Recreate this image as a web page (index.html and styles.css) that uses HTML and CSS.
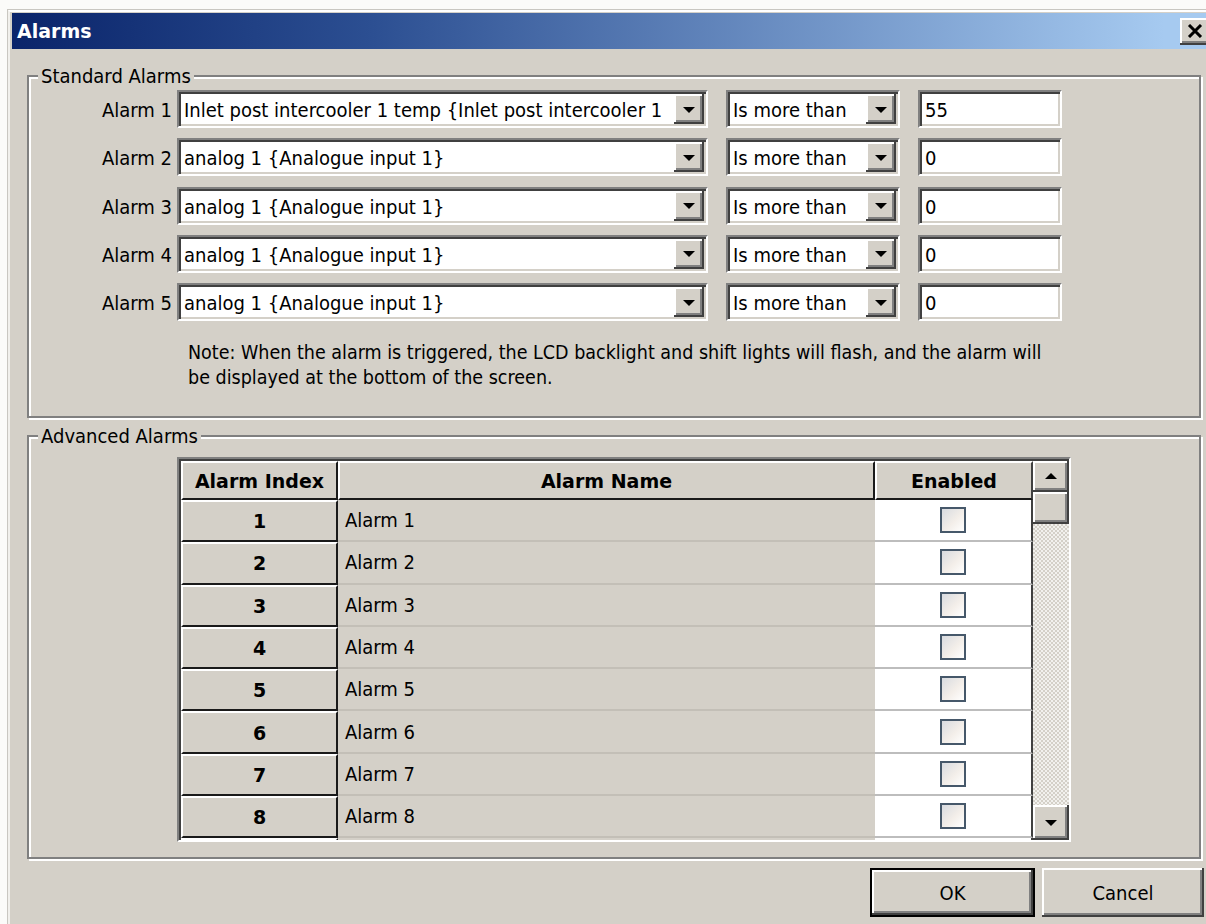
FILE: index.html
```html
<!DOCTYPE html>
<html lang="en">
<head>
<meta charset="utf-8">
<title>Alarms</title>
<link rel="stylesheet" href="styles.css">
</head>
<body>
<div class="window">
  <div class="titlebar">
    <span class="title">Alarms</span>
    <button class="close" aria-label="Close">
      <svg width="16" height="14" viewBox="0 0 16 14"><path d="M2 1 L14 13 M14 1 L2 13" stroke="#000" stroke-width="3" fill="none"/></svg>
    </button>
  </div>
  <div class="client">
    <section class="group group-standard">
      <div class="group-title">Standard Alarms</div>
      <div class="alarm-list">
        <div class="alarm-row">
          <span class="alarm-label">Alarm 1</span>
          <div class="combo combo-channel"><span class="combo-text">Inlet post intercooler 1 temp {Inlet post intercooler 1</span><span class="drop-btn"><span class="arrow"></span></span></div>
          <div class="combo combo-op"><span class="combo-text">Is more than</span><span class="drop-btn"><span class="arrow"></span></span></div>
          <div class="textbox">55</div>
        </div>
        <div class="alarm-row">
          <span class="alarm-label">Alarm 2</span>
          <div class="combo combo-channel"><span class="combo-text">analog 1 {Analogue input 1}</span><span class="drop-btn"><span class="arrow"></span></span></div>
          <div class="combo combo-op"><span class="combo-text">Is more than</span><span class="drop-btn"><span class="arrow"></span></span></div>
          <div class="textbox">0</div>
        </div>
        <div class="alarm-row">
          <span class="alarm-label">Alarm 3</span>
          <div class="combo combo-channel"><span class="combo-text">analog 1 {Analogue input 1}</span><span class="drop-btn"><span class="arrow"></span></span></div>
          <div class="combo combo-op"><span class="combo-text">Is more than</span><span class="drop-btn"><span class="arrow"></span></span></div>
          <div class="textbox">0</div>
        </div>
        <div class="alarm-row">
          <span class="alarm-label">Alarm 4</span>
          <div class="combo combo-channel"><span class="combo-text">analog 1 {Analogue input 1}</span><span class="drop-btn"><span class="arrow"></span></span></div>
          <div class="combo combo-op"><span class="combo-text">Is more than</span><span class="drop-btn"><span class="arrow"></span></span></div>
          <div class="textbox">0</div>
        </div>
        <div class="alarm-row">
          <span class="alarm-label">Alarm 5</span>
          <div class="combo combo-channel"><span class="combo-text">analog 1 {Analogue input 1}</span><span class="drop-btn"><span class="arrow"></span></span></div>
          <div class="combo combo-op"><span class="combo-text">Is more than</span><span class="drop-btn"><span class="arrow"></span></span></div>
          <div class="textbox">0</div>
        </div>
      </div>
      <p class="note">Note: When the alarm is triggered, the LCD backlight and shift lights will flash, and the alarm will<br>be displayed at the bottom of the screen.</p>
    </section>

    <section class="group group-advanced">
      <div class="group-title">Advanced Alarms</div>
      <div class="grid">
        <div class="grid-inner">
          <div class="grid-table">
            <div class="grid-head">
              <div class="hcell c-index">Alarm Index</div>
              <div class="hcell c-name">Alarm Name</div>
              <div class="hcell c-enabled">Enabled</div>
            </div>
            <div class="grid-row"><div class="cell c-index">1</div><div class="cell c-name">Alarm 1</div><div class="cell c-enabled"><span class="checkbox"></span></div></div>
            <div class="grid-row"><div class="cell c-index">2</div><div class="cell c-name">Alarm 2</div><div class="cell c-enabled"><span class="checkbox"></span></div></div>
            <div class="grid-row"><div class="cell c-index">3</div><div class="cell c-name">Alarm 3</div><div class="cell c-enabled"><span class="checkbox"></span></div></div>
            <div class="grid-row"><div class="cell c-index">4</div><div class="cell c-name">Alarm 4</div><div class="cell c-enabled"><span class="checkbox"></span></div></div>
            <div class="grid-row"><div class="cell c-index">5</div><div class="cell c-name">Alarm 5</div><div class="cell c-enabled"><span class="checkbox"></span></div></div>
            <div class="grid-row"><div class="cell c-index">6</div><div class="cell c-name">Alarm 6</div><div class="cell c-enabled"><span class="checkbox"></span></div></div>
            <div class="grid-row"><div class="cell c-index">7</div><div class="cell c-name">Alarm 7</div><div class="cell c-enabled"><span class="checkbox"></span></div></div>
            <div class="grid-row"><div class="cell c-index">8</div><div class="cell c-name">Alarm 8</div><div class="cell c-enabled"><span class="checkbox"></span></div></div>
            <div class="grid-row"><div class="cell c-index"></div><div class="cell c-name"></div><div class="cell c-enabled"></div></div>
          </div>
          <div class="vscroll">
            <div class="sb-btn sb-up"><span class="arrow arrow-up"></span></div>
            <div class="sb-thumb"></div>
            <div class="sb-track"></div>
            <div class="sb-btn sb-down"><span class="arrow"></span></div>
          </div>
        </div>
      </div>
    </section>

    <div class="buttons">
      <button class="btn btn-ok">OK</button>
      <button class="btn btn-cancel">Cancel</button>
    </div>
  </div>
</div>
</body>
</html>
```

FILE: styles.css
```css
html, body {
  margin: 0;
  height: 100%;
  overflow: hidden;
}

body {
  background: #fbfbf9;
  font-family: "DejaVu Sans Condensed", "DejaVu Sans", sans-serif;
  font-stretch: condensed;
  font-size: 20px;
  color: #000;
}

/* dialog frame */
.window {
  margin: 10px 0 0 8px;
  width: 1204px;
  height: 940px;
  box-sizing: border-box;
  padding: 1px 0 0 2px;
  background: #d4d0c8;
  border-top: 2px solid #fff;
  border-left: 2px solid #f1f0ec;
  box-shadow: -1px -1px 0 #c9c7c1;
}

.titlebar {
  height: 36px;
  display: flex;
  align-items: center;
  background: linear-gradient(to right, #0a246a 0%, #2c4f92 30%, #a6caf0 96%);
}

.title {
  padding-left: 5px;
  color: #fff;
  font-family: "DejaVu Sans", sans-serif;
  font-weight: bold;
  font-stretch: normal;
  font-size: 19px;
}

.close {
  margin-left: auto;
  margin-right: 2px;
  width: 30px;
  height: 27px;
  padding: 0;
  border: none;
  background: #d4d0c8;
  box-shadow: inset -2px -2px 0 #404040, inset 2px 2px 0 #fff, inset -4px -4px 0 #808080;
  display: flex;
  align-items: center;
  justify-content: center;
}

.client {
  display: flex;
  flex-direction: column;
  padding: 0 11px 0 15px;
}

/* etched group boxes */
.group {
  border: 2px solid #808080;
  box-shadow: inset 2px 2px 0 #fff, 2px 2px 0 #fff;
}

.group-title {
  width: max-content;
  height: 24px;
  line-height: 24px;
  margin: -13px 0 0 9px;
  padding: 0 3px;
  background: #d4d0c8;
}

.group-standard {
  margin-top: 26px;
  padding-bottom: 26px;
}

.alarm-list {
  margin-top: 2px;
  display: flex;
  flex-direction: column;
  gap: 10.25px;
}

.alarm-row {
  display: flex;
  align-items: center;
  height: 38px;
}

.alarm-label {
  width: 143px;
  text-align: right;
  margin-right: 5px;
  padding-top: 2px;
}

/* sunken edit / combo fields */
.combo, .textbox {
  height: 38px;
  box-sizing: border-box;
  background: #fff;
  border: 2px solid;
  border-color: #808080 #fff #fff #808080;
  box-shadow: inset 2px 2px 0 #404040, inset -2px -2px 0 #d4d0c8;
  display: flex;
  align-items: center;
  white-space: nowrap;
  overflow: hidden;
  padding-top: 2px;
}

.combo-channel { width: 531px; }
.combo-op { width: 174px; margin-left: 18px; }
.textbox { width: 144px; margin-left: 18px; padding-left: 5px; }

.combo-text {
  flex: 1;
  overflow: hidden;
  padding-left: 5px;
  margin-right: 6px;
}

.drop-btn {
  width: 30px;
  height: 30px;
  margin: -2px 2px 0 0;
  flex: none;
  background: #d4d0c8;
  box-shadow: inset -2px -2px 0 #404040, inset 2px 2px 0 #fff, inset -4px -4px 0 #808080;
  display: flex;
  align-items: center;
  justify-content: center;
}

.arrow {
  width: 0;
  height: 0;
  border-left: 6px solid transparent;
  border-right: 6px solid transparent;
  border-top: 6px solid #000;
  margin-top: 1px;
}

.arrow-up {
  border-top: none;
  border-bottom: 6px solid #000;
  margin-top: -2px;
}

.note {
  margin: 19px 0 0 159px;
  line-height: 25px;
  font-size: 19.5px;
}

/* advanced alarm grid */
.group-advanced {
  margin-top: 17px;
  padding-bottom: 15px;
}

.grid {
  margin: 9px 0 0 148px;
  width: 894px;
  box-sizing: border-box;
  border: 2px solid;
  border-color: #808080 #fff #fff #808080;
}

.grid-inner {
  display: flex;
  height: 379px;
  border-top: 2px solid #404040;
  border-left: 2px solid #404040;
  overflow: hidden;
}

.grid-table {
  width: 852px;
  overflow: hidden;
}

.grid-head, .grid-row {
  display: flex;
}

.c-index { width: 157px; }
.c-name { width: 537px; }
.c-enabled { width: 158px; }

.hcell {
  height: 39px;
  box-sizing: border-box;
  display: flex;
  align-items: center;
  justify-content: center;
  font-family: "DejaVu Sans", sans-serif;
  font-weight: bold;
  font-stretch: normal;
  font-size: 19px;
  background: #d4d0c8;
  border-top: 2px solid #fff;
  border-left: 2px solid #fff;
  border-right: 2px solid #1a1a1a;
  border-bottom: 2px solid #1a1a1a;
}

.cell {
  height: 42.3px;
  box-sizing: border-box;
  display: flex;
  align-items: center;
}

.cell.c-index {
  justify-content: center;
  font-family: "DejaVu Sans", sans-serif;
  font-weight: bold;
  font-stretch: normal;
  font-size: 19px;
  background: #d4d0c8;
  border-top: 2px solid #fff;
  border-left: 2px solid #fff;
  border-right: 2px solid #1a1a1a;
  border-bottom: 2px solid #1a1a1a;
}

.cell.c-name {
  padding-left: 7px;
  background: #d4d0c8;
  border-bottom: 2px solid #c3bfb7;
}

.cell.c-enabled {
  justify-content: center;
  background: #fff;
  border-bottom: 2px solid #bdbdbd;
  border-right: 2px solid #404040;
}

.hcell.c-enabled {
  border-right: 2px solid #404040;
}

.checkbox {
  width: 26px;
  height: 26px;
  box-sizing: border-box;
  border: 2px solid #46586a;
  background: linear-gradient(135deg, #d8dbe0 0%, #f3eee9 55%, #fff 100%);
}

.vscroll {
  width: 36px;
  display: flex;
  flex-direction: column;
}

.sb-btn, .sb-thumb {
  box-sizing: border-box;
  background: #d4d0c8;
  box-shadow: inset -2px -2px 0 #404040, inset 2px 2px 0 #fff, inset -4px -4px 0 #808080;
  display: flex;
  align-items: center;
  justify-content: center;
}

.sb-up { height: 31px; }
.sb-thumb { height: 32px; }
.sb-down { height: 35px; }

.sb-track {
  flex: 1;
  background: repeating-conic-gradient(#f2f1ee 0 25%, #d4d0c8 0 50%) 0 0 / 4px 4px;
}

/* dialog buttons */
.buttons {
  margin-top: 9px;
  display: flex;
  justify-content: flex-end;
  gap: 7px;
  margin-right: -3px;
}

.btn {
  height: 49px;
  padding: 0;
  font: inherit;
  color: #000;
  background: #d4d0c8;
  border: none;
  box-shadow: inset -2px -2px 0 #404040, inset 2px 2px 0 #fff, inset -4px -4px 0 #808080;
}

.btn-ok {
  width: 165px;
  border: 2px solid #000;
}

.btn-cancel {
  width: 162px;
}
```
